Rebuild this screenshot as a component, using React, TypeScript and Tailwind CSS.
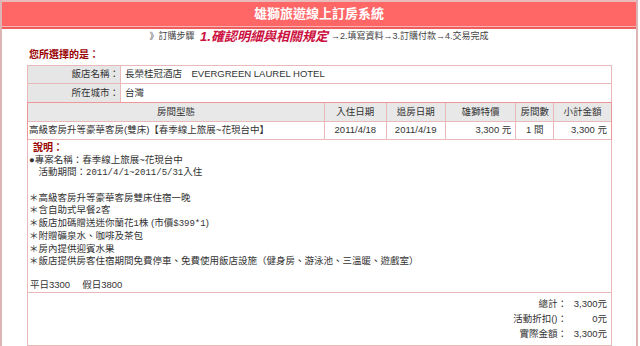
const cjk = "font-['Liberation_Sans','Noto_Sans_CJK_TC',sans-serif]"

function Mono({ children }: { children: React.ReactNode }) {
  return <span className="font-['Liberation_Mono',monospace] text-[9px]">{children}</span>
}

export default function App() {
  const cols = [
    { label: "房間型態", w: "w-[298px]" },
    { label: "入住日期", w: "w-[62px]" },
    { label: "退房日期", w: "w-[59px]" },
    { label: "雄獅特價", w: "w-[71px]" },
    { label: "房間數", w: "w-[38px]" },
    { label: "小計金額", w: "w-[57px]" },
  ]

  return (
    <div className={`h-[346px] w-[638px] overflow-hidden border-x-2 border-[#dcb4b4] bg-white text-[#333] ${cjk}`}>
      {/* header */}
      <div className="flex h-[26px] items-center justify-center border-t-2 border-[#ebbaba] bg-[#ff6666] text-[13px] font-bold text-white">
        雄獅旅遊線上訂房系統
      </div>
      <div className="h-px bg-[#f8b4b4]" />
      <div className="h-[2px] bg-[#ee5e5e]" />

      {/* steps */}
      <div className="flex h-[15px] items-center justify-center text-[9px] text-[#444]">
        <span>》訂購步驟&nbsp;</span>
        <span className="px-[3px] text-[13px] font-bold italic text-[#cc1040]">1.確認明細與相關規定</span>
        <span>→2.填寫資料→3.訂購付款→4.交易完成</span>
      </div>

      <div className="pl-[25px] pr-[24px]">
        <div className="flex h-[21px] items-center pl-[2px] text-[10px] font-bold text-[#990000]">您所選擇的是：</div>

        {/* hotel info */}
        <div className="border-x border-t border-[#e9b8b8] text-[9.5px]">
          <div className="flex h-[18px] border-b border-[#e9b8b8]">
            <div className="flex w-[93px] items-center justify-end border-r border-[#e9b8b8] bg-[#e6e6e6] pr-px">飯店名稱：</div>
            <div className="flex items-center pl-[4px]">長榮桂冠酒店　EVERGREEN LAUREL HOTEL</div>
          </div>
          <div className="flex h-[18px]">
            <div className="flex w-[93px] items-center justify-end border-r border-[#e9b8b8] bg-[#e6e6e6] pr-px">所在城市：</div>
            <div className="flex items-center pl-[4px]">台灣</div>
          </div>
        </div>

        {/* room table */}
        <div className="border-x border-t border-[#f09696] text-[9.5px]">
          <div className="flex h-[19px] border-b border-[#e9b8b8] bg-[#e8e8e8]">
            {cols.map((c, i) => (
              <div
                key={c.label}
                className={`flex items-center justify-center ${c.w} ${i < cols.length - 1 ? "border-r border-[#e9b8b8]" : ""}`}
              >
                {c.label}
              </div>
            ))}
          </div>
          <div className="flex h-[18px] border-b border-[#e9b8b8]">
            <div className="flex w-[298px] items-center border-r border-[#e9b8b8] pl-px">
              高級客房升等豪華客房(雙床)【春季線上旅展~花現台中】
            </div>
            <div className="flex w-[62px] items-center justify-center border-r border-[#e9b8b8]">2011/4/18</div>
            <div className="flex w-[59px] items-center justify-center border-r border-[#e9b8b8]">2011/4/19</div>
            <div className="flex w-[71px] items-center justify-end border-r border-[#e9b8b8] pr-[4px]">3,300 元</div>
            <div className="flex w-[38px] items-center justify-center border-r border-[#e9b8b8]">1 間</div>
            <div className="flex w-[57px] items-center justify-end pr-[4px]">3,300 元</div>
          </div>
        </div>

        {/* description */}
        <div className="h-[153px] border-x border-b border-[#e9b8b8] pl-px pt-[2px] text-[9.5px] leading-[12.2px]">
          <div className="pl-[4px] text-[10px] font-bold text-[#990000]">說明：</div>
          <div>●專案名稱：春季線上旅展~花現台中</div>
          <div>　活動期間：<Mono>2011/4/1~2011/5/31</Mono>入住</div>
          <div>&nbsp;</div>
          <div>＊高級客房升等豪華客房雙床住宿一晚</div>
          <div>＊含自助式早餐<Mono>2</Mono>客</div>
          <div>＊飯店加碼贈送迷你蘭花<Mono>1</Mono>株 (市價<Mono>$399*1</Mono>)</div>
          <div>＊附贈礦泉水、咖啡及茶包</div>
          <div>＊房內提供迎賓水果</div>
          <div>＊飯店提供房客住宿期間免費停車、免費使用飯店設施（健身房、游泳池、三溫暖、遊戲室）</div>
          <div>&nbsp;</div>
          <div className="pl-[1px]">平日3300　 假日3800</div>
        </div>

        {/* totals */}
        <div className="h-[53px] border-x border-b border-[#e9b8b8] pt-[3px] pr-[4px] text-[9.5px] leading-[15px]">
          <div className="grid grid-cols-[1fr_40px]">
            <div className="text-right">總計：</div>
            <div className="text-right">3,300元</div>
            <div className="text-right">活動折扣()：</div>
            <div className="text-right">0元</div>
            <div className="text-right">實際金額：</div>
            <div className="text-right">3,300元</div>
          </div>
        </div>
      </div>
    </div>
  )
}
